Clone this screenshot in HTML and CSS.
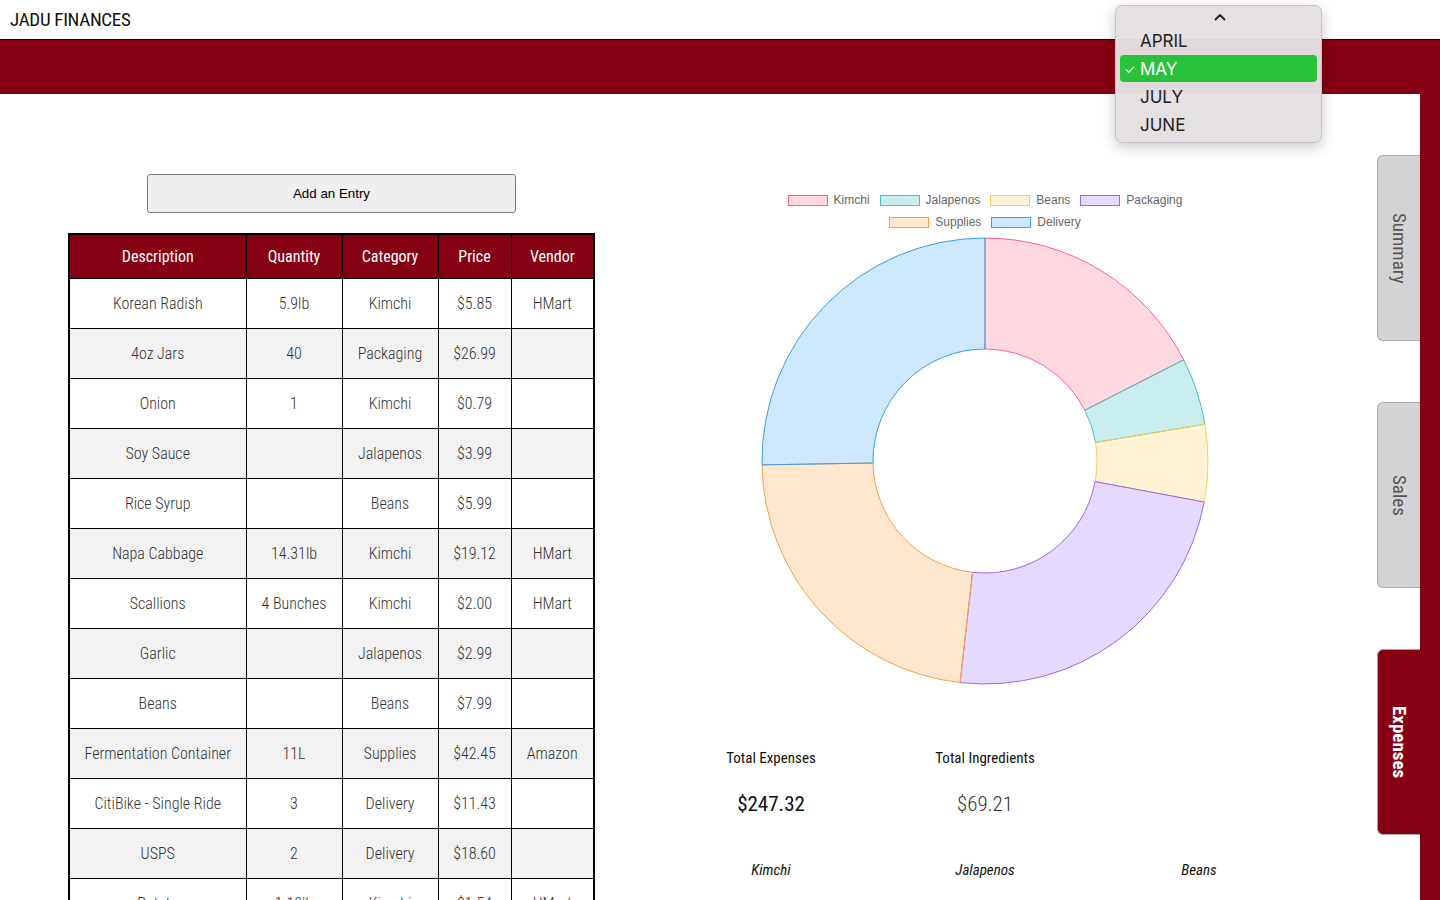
FILE: index.html
```html
<!DOCTYPE html>
<html lang="en">
<head>
<meta charset="utf-8">
<title>Jadu Finances</title>
<link rel="stylesheet" href="styles.css">
</head>
<body>
<header class="topbar"><span class="brand">JADU FINANCES</span></header>
<div class="band"></div>
<div class="main">
  <section class="left">
    <button class="add-btn" type="button">Add an Entry</button>
    <table class="ledger">
      <colgroup>
        <col class="c-desc"><col class="c-qty"><col class="c-cat"><col class="c-price"><col class="c-vendor">
      </colgroup>
      <thead>
        <tr><th>Description</th><th>Quantity</th><th>Category</th><th>Price</th><th>Vendor</th></tr>
      </thead>
      <tbody>
        <tr><td>Korean Radish</td><td>5.9lb</td><td>Kimchi</td><td>$5.85</td><td>HMart</td></tr>
        <tr><td>4oz Jars</td><td>40</td><td>Packaging</td><td>$26.99</td><td></td></tr>
        <tr><td>Onion</td><td>1</td><td>Kimchi</td><td>$0.79</td><td></td></tr>
        <tr><td>Soy Sauce</td><td></td><td>Jalapenos</td><td>$3.99</td><td></td></tr>
        <tr><td>Rice Syrup</td><td></td><td>Beans</td><td>$5.99</td><td></td></tr>
        <tr><td>Napa Cabbage</td><td>14.31lb</td><td>Kimchi</td><td>$19.12</td><td>HMart</td></tr>
        <tr><td>Scallions</td><td>4 Bunches</td><td>Kimchi</td><td>$2.00</td><td>HMart</td></tr>
        <tr><td>Garlic</td><td></td><td>Jalapenos</td><td>$2.99</td><td></td></tr>
        <tr><td>Beans</td><td></td><td>Beans</td><td>$7.99</td><td></td></tr>
        <tr><td>Fermentation Container</td><td>11L</td><td>Supplies</td><td>$42.45</td><td>Amazon</td></tr>
        <tr><td>CitiBike - Single Ride</td><td>3</td><td>Delivery</td><td>$11.43</td><td></td></tr>
        <tr><td>USPS</td><td>2</td><td>Delivery</td><td>$18.60</td><td></td></tr>
        <tr><td>Potato</td><td>1.10lb</td><td>Kimchi</td><td>$1.54</td><td>HMart</td></tr>
      </tbody>
    </table>
  </section>

  <section class="right">
    <div class="legend">
      <div class="legend-row">
        <span class="legend-item"><span class="swatch sw-kimchi"></span>Kimchi</span>
        <span class="legend-item"><span class="swatch sw-jalapenos"></span>Jalapenos</span>
        <span class="legend-item"><span class="swatch sw-beans"></span>Beans</span>
        <span class="legend-item"><span class="swatch sw-packaging"></span>Packaging</span>
      </div>
      <div class="legend-row">
        <span class="legend-item"><span class="swatch sw-supplies"></span>Supplies</span>
        <span class="legend-item"><span class="swatch sw-delivery"></span>Delivery</span>
      </div>
    </div>
    <svg class="donut" width="448" height="448" viewBox="0 0 448 448">
      <path d="M224,1 A223,223 0 0 1 422.7,122.8 L323.8,173.2 A112,112 0 0 0 224,112 Z" fill="rgba(255,99,132,0.25)" stroke="rgb(255,99,132)" stroke-width="1"/>
      <path d="M422.7,122.8 A223,223 0 0 1 443.9,187.2 L334.5,205.5 A112,112 0 0 0 323.8,173.2 Z" fill="rgba(75,192,192,0.3)" stroke="rgb(75,192,192)" stroke-width="1"/>
      <path d="M443.9,187.2 A223,223 0 0 1 443.2,265.0 L334.1,244.6 A112,112 0 0 0 334.5,205.5 Z" fill="rgba(255,205,86,0.25)" stroke="rgb(255,205,86)" stroke-width="1"/>
      <path d="M443.2,265.0 A223,223 0 0 1 199.1,445.6 L211.5,335.3 A112,112 0 0 0 334.1,244.6 Z" fill="rgba(153,102,255,0.25)" stroke="rgb(153,102,255)" stroke-width="1"/>
      <path d="M199.1,445.6 A223,223 0 0 1 1.0,227.9 L112.0,226.0 A112,112 0 0 0 211.5,335.3 Z" fill="rgba(255,159,64,0.25)" stroke="rgb(255,159,64)" stroke-width="1"/>
      <path d="M1.0,227.9 A223,223 0 0 1 224,1 L224,112 A112,112 0 0 0 112.0,226.0 Z" fill="rgba(54,162,235,0.25)" stroke="rgb(54,162,235)" stroke-width="1"/>
    </svg>
    <div class="totals">
      <div class="total-label">Total Expenses</div>
      <div class="total-label">Total Ingredients</div>
      <div class="total-label"></div>
      <div class="total-value strong">$247.32</div>
      <div class="total-value light">$69.21</div>
      <div class="total-value"></div>
      <div class="cat-label">Kimchi</div>
      <div class="cat-label">Jalapenos</div>
      <div class="cat-label">Beans</div>
    </div>
  </section>

  <nav class="tabs">
    <div class="tab"><span class="tab-text">Summary</span></div>
    <div class="tab"><span class="tab-text">Sales</span></div>
    <div class="tab active"><span class="tab-text">Expenses</span></div>
  </nav>
  <div class="rail"></div>
</div>

<div class="month-menu">
  <div class="menu-chevron">
    <svg width="12" height="8" viewBox="0 0 12 8"><polyline points="1.5,6.5 6,2 10.5,6.5" fill="none" stroke="#222" stroke-width="1.8" stroke-linecap="round" stroke-linejoin="round"/></svg>
  </div>
  <div class="menu-item">APRIL</div>
  <div class="menu-item selected"><span class="check">✓</span>MAY</div>
  <div class="menu-item">JULY</div>
  <div class="menu-item">JUNE</div>
</div>
</body>
</html>
```
FILE: styles.css
```css
html, body {
  margin: 0;
  padding: 0;
  background: #ffffff;
}
body {
  font-family: Roboto, "Liberation Sans", sans-serif;
  font-stretch: 85%;
  color: #222;
  position: relative;
}

.topbar {
  height: 39px;
  border-bottom: 1px solid #000;
  display: flex;
  align-items: center;
  padding-left: 10px;
}
.brand {
  font-size: 19px;
  letter-spacing: -0.3px;
  color: #111;
}
.band {
  height: 54px;
  background: #860013;
}

.main {
  display: flex;
  align-items: stretch;
  min-height: 900px;
}

.left {
  flex: none;
  width: 663px;
  display: flex;
  flex-direction: column;
  align-items: center;
  padding-top: 80px;
}
.add-btn {
  width: 369px;
  height: 39px;
  background: #efefef;
  border: 1px solid #7a7a7a;
  border-radius: 3px;
  font-family: "Liberation Sans", Arial, sans-serif;
  font-stretch: normal;
  font-size: 13.33px;
  color: #000;
  margin-bottom: 20px;
}

.ledger {
  width: 527px;
  border-collapse: collapse;
  table-layout: fixed;
  border: 2px solid #000;
}
.c-desc { width: 177px; }
.c-qty { width: 96px; }
.c-cat { width: 96px; }
.c-price { width: 73px; }
.c-vendor { width: 83px; }
.ledger th {
  background: #860013;
  color: #fff;
  font-weight: 400;
  font-size: 16px;
  height: 43px;
  padding: 0;
  border: 1px solid #000;
}
.ledger td {
  height: 49px;
  padding: 0 2px;
  border: 1px solid #000;
  text-align: center;
  font-size: 16px;
  font-weight: 300;
  color: #333;
  white-space: nowrap;
}
.ledger tbody tr:nth-child(even) td {
  background: #f2f2f2;
}

.right {
  flex: none;
  width: 644px;
  display: flex;
  flex-direction: column;
  align-items: center;
  padding-top: 95px;
}
.legend {
  font-family: "Liberation Sans", Arial, sans-serif;
  font-stretch: normal;
  font-size: 12px;
  color: #666;
  margin-bottom: 4px;
}
.legend-row {
  height: 22px;
  display: flex;
  justify-content: center;
  align-items: center;
  gap: 10px;
}
.legend-item {
  display: flex;
  align-items: center;
}
.swatch {
  width: 38px;
  height: 9px;
  margin-right: 6px;
  border: 1px solid;
}
.sw-kimchi { background: rgba(255,99,132,0.25); border-color: rgb(255,99,132); }
.sw-jalapenos { background: rgba(75,192,192,0.3); border-color: rgb(75,192,192); }
.sw-beans { background: rgba(255,205,86,0.25); border-color: rgb(255,205,86); }
.sw-packaging { background: rgba(153,102,255,0.25); border-color: rgb(153,102,255); }
.sw-supplies { background: rgba(255,159,64,0.25); border-color: rgb(255,159,64); }
.sw-delivery { background: rgba(54,162,235,0.25); border-color: rgb(54,162,235); }

.donut {
  display: block;
}

.totals {
  display: grid;
  grid-template-columns: repeat(3, 214px);
  justify-items: center;
  margin-top: 63px;
}
.total-label {
  height: 20px;
  line-height: 20px;
  font-size: 15px;
  color: #111;
}
.total-value {
  height: 28px;
  line-height: 28px;
  font-size: 21px;
  margin-top: 22px;
  color: #111;
}
.total-value.strong { font-weight: 400; }
.total-value.light { font-weight: 300; color: #333; }
.cat-label {
  height: 20px;
  line-height: 20px;
  margin-top: 42px;
  font-size: 15px;
  font-style: italic;
  color: #111;
}

.tabs {
  flex: none;
  margin-left: auto;
  width: 43px;
  display: flex;
  flex-direction: column;
  gap: 61px;
  padding-top: 61px;
}
.tab {
  height: 184px;
  background: #d3d3d3;
  border: 1px solid #ababab;
  border-right: none;
  border-radius: 6px 0 0 6px;
  display: flex;
  align-items: center;
  justify-content: center;
}
.tab-text {
  writing-mode: vertical-rl;
  font-size: 19px;
  color: #555;
}
.tab.active {
  background: #860013;
}
.tab.active .tab-text {
  color: #fff;
  font-weight: 700;
}
.rail {
  flex: none;
  width: 20px;
  background: #860013;
}

.month-menu {
  position: absolute;
  left: 1115px;
  top: 5px;
  width: 205px;
  height: 136px;
  background: rgba(228, 224, 226, 0.97);
  border: 1px solid #c4c2c3;
  border-radius: 7px;
  box-shadow: 0 4px 14px rgba(0,0,0,0.22);
  font-family: Inter, "Liberation Sans", sans-serif;
  font-stretch: normal;
  font-size: 17px;
  color: #222;
}
.menu-chevron {
  height: 21px;
  display: flex;
  justify-content: center;
  align-items: center;
  padding-left: 2px;
}
.menu-chevron svg { display: block; }
.menu-item {
  position: relative;
  height: 28px;
  line-height: 28px;
  margin: 0 4px;
  padding-left: 20px;
  border-radius: 4px;
}
.menu-item.selected {
  background: #28c33a;
  color: #fff;
  height: 27px;
  margin-bottom: 1px;
}
.check {
  position: absolute;
  left: 4px;
  top: 0;
  font-size: 13px;
}
```
